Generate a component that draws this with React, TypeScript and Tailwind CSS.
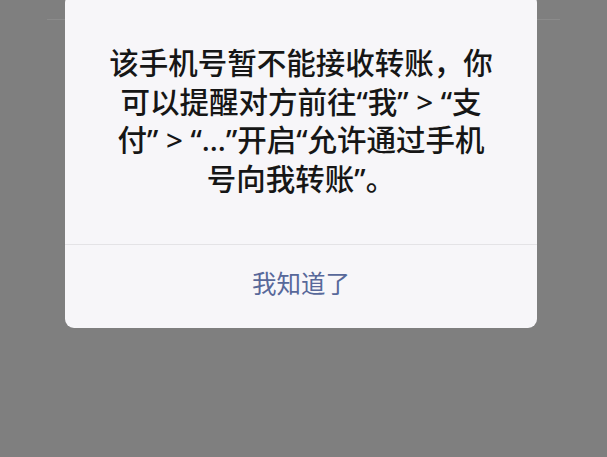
export default function App() {
  return (
    <div
      className="relative w-[607px] h-[457px] overflow-hidden bg-[#7f7f7f]"
      style={{ fontFamily: '"Noto Sans", "Noto Sans CJK SC", sans-serif' }}
    >
      {/* nav bar edge dimmed under the mask */}
      <div className="pt-[19px] px-[47px]">
        <div className="h-px bg-[#8b8b8b]" />
      </div>

      {/* alert dialog */}
      <div className="absolute left-[65px] top-[-6px] w-[472px] rounded-[9px] bg-[#f7f6f9]">
        <div className="px-[16px] pt-[50px] pb-[46px] text-center whitespace-nowrap text-[29.5px] leading-[38.5px] font-medium text-[#161616]">
          该手机号暂不能接收转账，你
          <br />
          可以提醒对方前往“我” &gt; “支
          <br />
          付” &gt; “...”开启“允许通过手机
          <br />
          号向我转账”。
        </div>
        <div className="h-px bg-[#e4e3e6]" />
        <div className="flex h-[83px] items-center justify-center pb-[4px] text-[24.5px] text-[#58689a]">
          我知道了
        </div>
      </div>
    </div>
  );
}
